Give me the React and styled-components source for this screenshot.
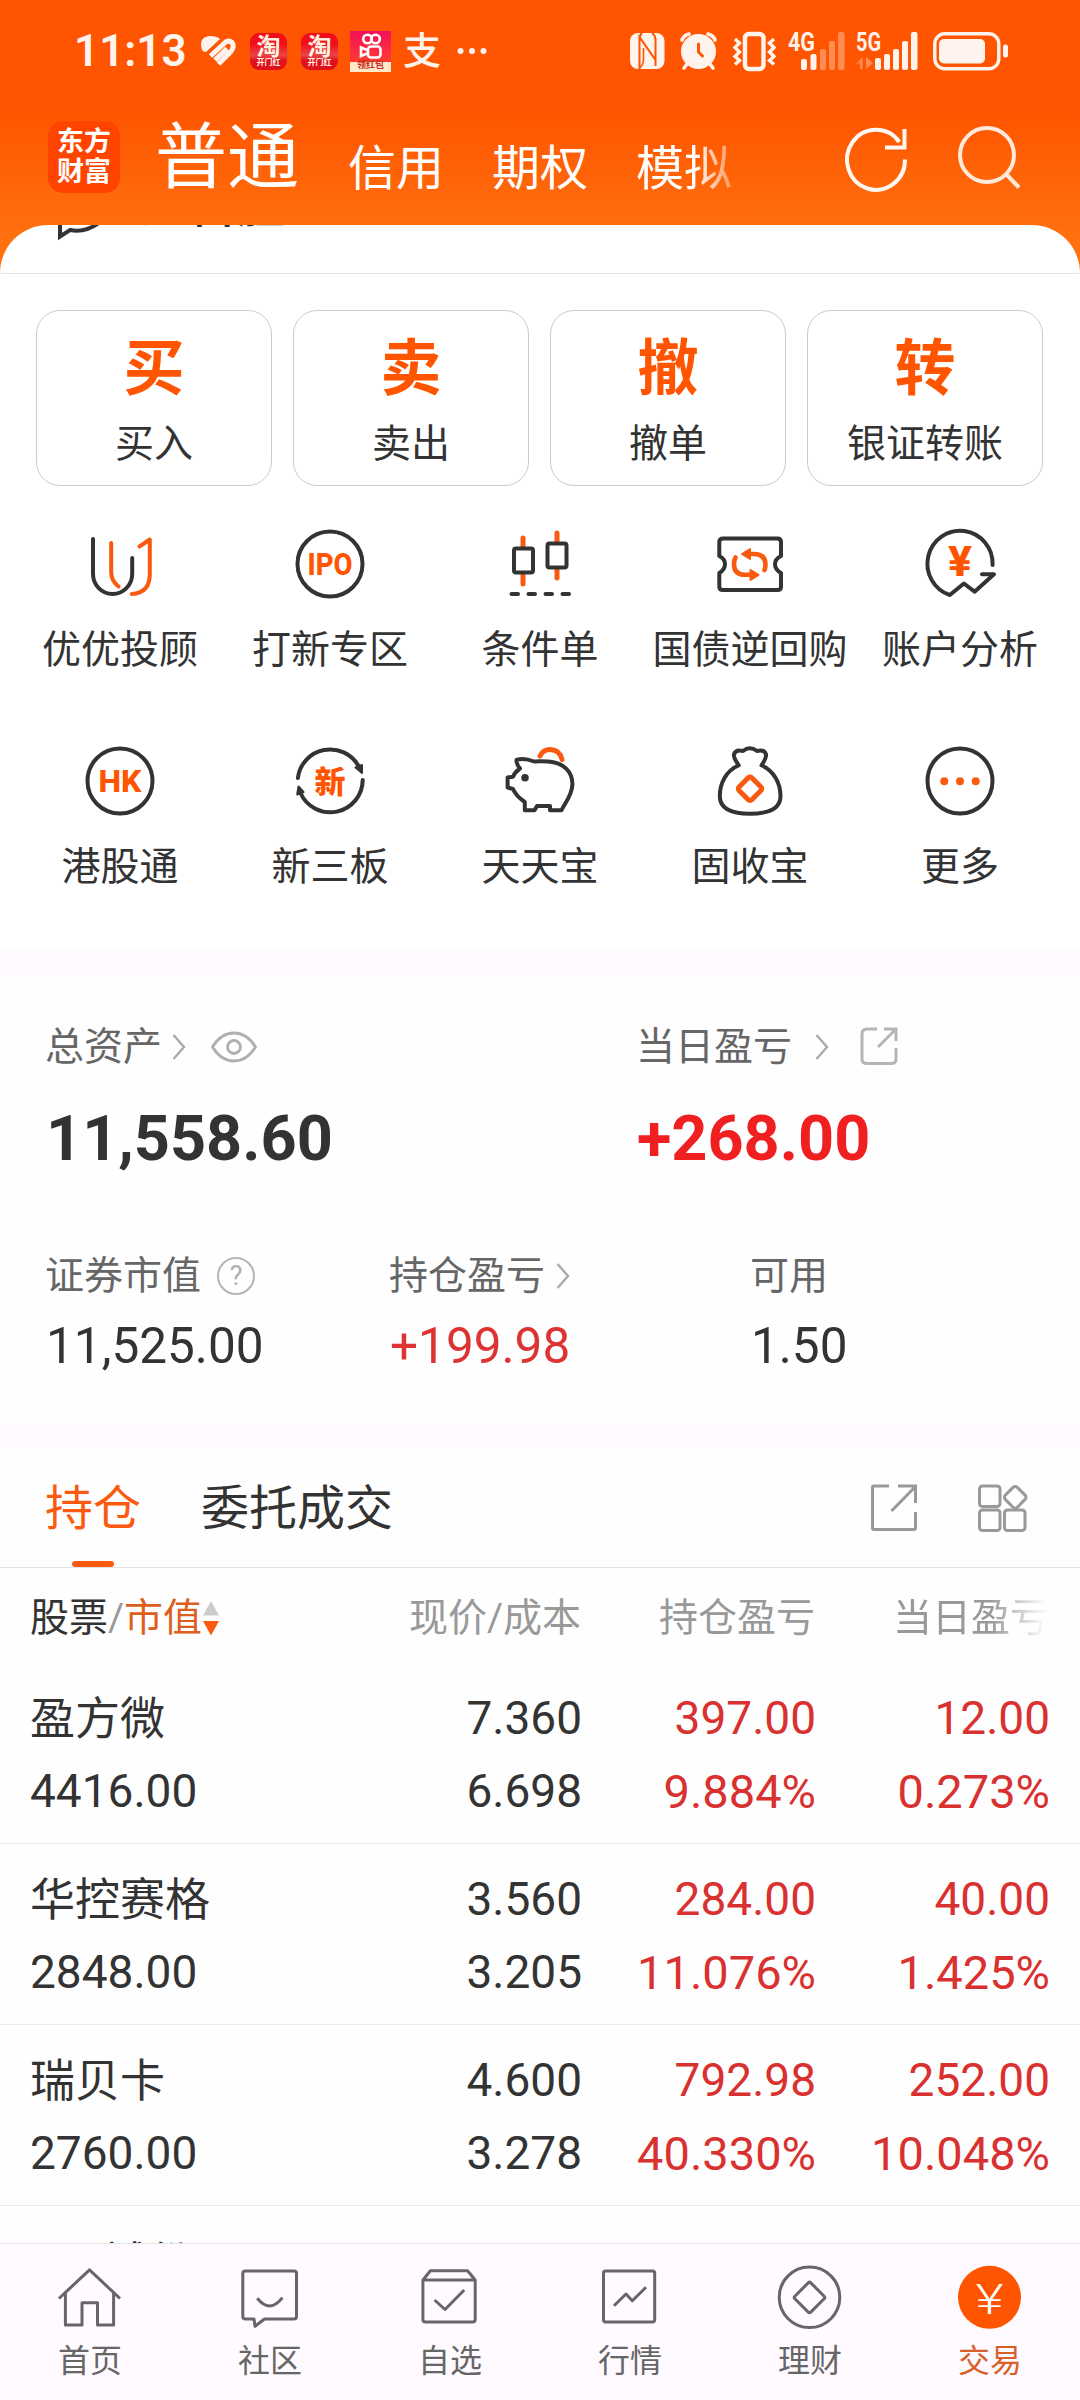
import React from 'react';
import styled, { createGlobalStyle } from 'styled-components';

const dark = '#333333';
const orange = '#fa5a0f';

const marketTabs = ['信用', '期权', '模拟'];

const trades = [
  { mark: '买', label: '买入' },
  { mark: '卖', label: '卖出' },
  { mark: '撤', label: '撤单' },
  { mark: '转', label: '银证转账' },
];

const tools = [
  { icon: 'adviser', label: '优优投顾' },
  { icon: 'ipo', label: '打新专区' },
  { icon: 'candles', label: '条件单' },
  { icon: 'repo', label: '国债逆回购' },
  { icon: 'account', label: '账户分析' },
  { icon: 'hk', label: '港股通' },
  { icon: 'board', label: '新三板' },
  { icon: 'pig', label: '天天宝' },
  { icon: 'bag', label: '固收宝' },
  { icon: 'more', label: '更多' },
];

const holdings = [
  { name: '盈方微', value: '4416.00', price: '7.360', cost: '6.698', profit: '397.00', rate: '9.884%', day: '12.00', dayRate: '0.273%' },
  { name: '华控赛格', value: '2848.00', price: '3.560', cost: '3.205', profit: '284.00', rate: '11.076%', day: '40.00', dayRate: '1.425%' },
  { name: '瑞贝卡', value: '2760.00', price: '4.600', cost: '3.278', profit: '792.98', rate: '40.330%', day: '252.00', dayRate: '10.048%' },
];

const navLinks = [
  { icon: 'home', label: '首页' },
  { icon: 'community', label: '社区' },
  { icon: 'picks', label: '自选' },
  { icon: 'market', label: '行情' },
  { icon: 'wealth', label: '理财' },
  { icon: 'trade', label: '交易', active: true },
];

// used by the shape maps below, so they have to come first
const IconText = styled.text.attrs({ textAnchor: 'middle', lengthAdjust: 'spacingAndGlyphs' })`
  fill: #ff5500;
  stroke: none;
  font-size: ${(props) => props.$size}px;
  font-weight: 800;
`;

const YenText = styled.text.attrs({ lengthAdjust: 'spacingAndGlyphs' })`
  fill: #fff;
  stroke: none;
  font-size: 43px;
  font-weight: 300;
  text-anchor: middle;
`;

const toolShapes = {
  adviser: <>
    <path d="M9 11V46a19.6 20 0 0 0 39.2 0V30" />
    <g stroke={orange}>
      <path d="M27.2 15V44Q27.2 53 34.6 58.5" />
      <path d="M55.5 18.5L65.8 11.5V46Q65.8 65 47.8 66" />
    </g>
  </>,
  ipo: <>
    <circle cx="36" cy="36" r="32.5" />
    <IconText x="36" y="47" textLength="45" $size={32}>IPO</IconText>
  </>,
  candles: <>
    <path d="M19 10V18M19 47V56M53 5V13M53 42V50" stroke={orange} strokeWidth="5" />
    <rect x="10" y="20.5" width="19" height="24" rx="2" />
    <rect x="43.5" y="15.5" width="19" height="24" rx="2" />
    <path d="M7.5 66h6.5M24.5 66h6.5M41.5 66h6.5M58.5 66h6.5" />
  </>,
  repo: <>
    <path d="M9 10.5H63.5Q67 10.5 67 14V28Q61 31 61 36.2Q61 41.5 67 45V58.5Q67 62 63.5 62H9Q5.3 62 5.3 58.5V45Q11 41.5 11 36.2Q11 31 5.3 28V14Q5.3 10.5 9 10.5Z" />
    <g stroke={orange} strokeWidth="4.6">
      <path d="M35 26H40Q51.5 26 51.5 37Q51.5 40 50.5 42M21.5 29.5Q20 32 20 36Q20 46.8 31 46.8H36" />
      <path d="M28 26L36 21V31ZM44.5 46.8L36.5 42V52Z" fill={orange} strokeWidth="2" />
    </g>
  </>,
  account: <>
    <path d="M68.6 37A32.6 33 0 1 0 25.8 67L39.9 55.5L50.6 63.7L70 46.3H58" />
    <IconText x="36" y="47.5" textLength="24" $size={43}>¥</IconText>
  </>,
  hk: <>
    <circle cx="36" cy="36" r="32.5" />
    <IconText x="36" y="47" textLength="43" $size={32}>HK</IconText>
  </>,
  board: <>
    <path d="M3.9 33A32.5 32.5 0 0 1 64.5 21M68.7 35A32.5 32.5 0 0 1 6.5 48" />
    <path d="M61.5 22.5L68 20V28ZM4.5 41.5L3.2 49.5L9.5 47Z" fill={dark} strokeWidth="2" />
    <IconText x="36" y="47.5" textLength="31" $size={31}>新</IconText>
  </>,
  pig: <>
    <path d="M12.5 15Q20 12.5 30 16.5Q37 16 44 16.5C60 17.5 68.4 27 68.4 39C68.4 50 61 58 57.4 65.3H46V61H33L30.5 65.3H20.8V57Q12 51 9 44L3.6 42.5V32.5L9 31.7Q11 27 16 23.5Q12.5 20 12.5 15Z" />
    <circle cx="21" cy="32.7" r="3" fill={dark} strokeWidth="1.5" />
    <path d="M36 11Q39 4.5 46.3 4.5Q56 5 58 14.5" stroke={orange} strokeWidth="5" />
  </>,
  bag: <>
    <path d="M24.7 20.3Q19.5 13 19.9 9.5Q21.5 4 29 6Q35.7 0.5 43 6Q50.5 4 52 9.5Q52.5 13 47.5 20.3C60 26 66.5 38 66.5 51C66.5 63 55 68.7 36 68.7C17 68.7 5.8 63 5.8 51C5.8 38 12 26 24.7 20.3Z" />
    <rect x="27" y="34.8" width="18" height="18" rx="2.5" transform="rotate(45 36 43.8)" stroke={orange} strokeWidth="5" />
  </>,
  more: <>
    <circle cx="36" cy="36" r="32.5" />
    <g fill={orange} stroke="none">
      <circle cx="20.3" cy="36.2" r="4" />
      <circle cx="36" cy="36.2" r="4" />
      <circle cx="51.7" cy="36.2" r="4" />
    </g>
  </>,
};

const navShapes = {
  home: <path d="M1 33.5L31.5 4.8L62 33.5M7.4 28V60H24V37.7H39.5V60H55.6V28" />,
  community: <path d="M7.5 6H56Q58.5 6 58.5 8.5V51.5Q58.5 54 56 54H26.5L17 61.3L16 54H7.5Q4.8 54 4.8 51.5V8.5Q4.8 6 7.5 6ZM19.2 33.3Q32 49 44.4 32.7" />,
  picks: <path d="M4.9 15H57.2V54.5Q57.2 57 54.7 57H7.5Q4.9 57 4.9 54.5ZM4.9 15L12.4 5.7H49.6L57.2 15M16.6 35L27 44.5L46.2 25" />,
  market: <path d="M7.5 6H54.5Q56.7 6 56.7 8.2V54.8Q56.7 57 54.5 57H7.5Q5.5 57 5.5 54.8V8.2Q5.5 6 7.5 6ZM16 40.7L28 29L34.3 35.7L48 22.3" />,
  wealth: <>
    <circle cx="31.5" cy="32.3" r="30.3" />
    <rect x="20.3" y="21.2" width="22.5" height="22.5" rx="1.8" transform="rotate(45 31.5 32.4)" />
  </>,
  trade: <>
    <circle cx="31.5" cy="32.3" r="31.5" fill="#ff5500" stroke="none" />
    <YenText x="31.5" y="48.5" textLength="28">¥</YenText>
  </>,
};

const Chevron = ({ gap }) => (
  <Inline $gap={gap}>
    <svg width="14" height="26" viewBox="0 0 14 26" fill="none" stroke="#aaa" strokeWidth="2.4">
      <path d="M1.5 1L12 13L1.5 25" />
    </svg>
  </Inline>
);

const TaobaoIcon = () => (
  <AppBadge>
    <span>淘</span>
    <small>开门红</small>
  </AppBadge>
);

const StatusBar = () => (
  <StatusRow>
    <Clock>11:13</Clock>
    <StatusItem $gap={14}>
      <svg width="37" height="32" viewBox="0 0 37 32">
        <path d="M2 15Q-2 2 10 1Q17 1 20 4L6 17Q3 17 2 15Z" fill="#fff3ee" />
        <path d="M10.5 21L23 9.5Q28 4 32 7.5Q35 12 30.5 17L18.5 29M15 25L27 13.5" fill="none" stroke="#fff3ee" strokeWidth="5" />
      </svg>
    </StatusItem>
    <StatusItem $gap={13}><TaobaoIcon /></StatusItem>
    <StatusItem $gap={14}><TaobaoIcon /></StatusItem>
    <StatusItem $gap={12}>
      <Kuaishou>
        <svg width="41" height="30" viewBox="0 0 41 30" fill="none" stroke="#fff" strokeWidth="2.6">
          <circle cx="17.5" cy="8" r="4.3" />
          <circle cx="25.5" cy="8" r="4.3" />
          <rect x="18" y="15.5" width="12.5" height="11" rx="3" />
          <path d="M17 19L11 16.5V25L17 22.5" />
        </svg>
        <small>领红包</small>
      </Kuaishou>
    </StatusItem>
    <StatusItem $gap={12}><Alipay>支</Alipay></StatusItem>
    <StatusItem $gap={16}>
      <svg width="30" height="8" viewBox="0 0 30 8" fill="#fff3ee">
        <circle cx="3.5" cy="4" r="3" />
        <circle cx="15" cy="4" r="3" />
        <circle cx="26.5" cy="4" r="3" />
      </svg>
    </StatusItem>
    <StatusItem $push>
      <svg width="35" height="36" viewBox="0 0 35 36">
        <rect x="0" y="0" width="34.5" height="36" rx="8" fill="#fff3ee" />
        <path d="M9.5 36V4L25.5 27V6Q25 2 22 0M9.5 4Q11 1 12 0M25.5 13V33" fill="none" stroke="#ff5500" strokeWidth="2" />
        <path d="M13.5 15V26Q13.5 32 9 35.5" fill="none" stroke="#ff5500" strokeWidth="1.6" />
      </svg>
    </StatusItem>
    <StatusItem $gap={15}>
      <svg width="37" height="38" viewBox="0 0 37 38" fill="none" stroke="#fff3ee" strokeWidth="3.6" strokeLinecap="round">
        <circle cx="18.5" cy="19.5" r="17.5" fill="#fff3ee" stroke="none" />
        <path d="M2 8Q4 3 9 2M35 8Q33 3 28 2M7 32L4 36M30 32L33 36" />
        <path d="M18.5 12V20L22.5 24" stroke="#ff5500" strokeWidth="3" />
      </svg>
    </StatusItem>
    <StatusItem $gap={16}>
      <svg width="43" height="39" viewBox="0 0 43 39" fill="none" stroke="#fff3ee" strokeWidth="3.4">
        <rect x="12" y="2" width="18.5" height="35" rx="4" strokeWidth="4.4" />
        <path d="M2 7L6.5 11L2 15.5L6.5 20L2 24.5L6.5 28.5L2 32.5M41 7L36.5 11L41 15.5L36.5 20L41 24.5L36.5 28.5L41 32.5" />
      </svg>
    </StatusItem>
    <StatusItem $gap={12}>
      <svg width="57" height="40" viewBox="0 0 57 40" fill="#fff3ee">
        <SignalText x="0" y="20" textLength="27">4G</SignalText>
        <rect x="13" y="28" width="6" height="11" rx="2" />
        <rect x="22.5" y="23" width="6" height="16" rx="2" />
        <g fillOpacity=".35">
          <rect x="32" y="18" width="6" height="21" rx="2" />
          <rect x="41" y="10" width="6" height="29" rx="2" />
          <rect x="50" y="1" width="6.5" height="38" rx="2" />
        </g>
      </svg>
    </StatusItem>
    <StatusItem $gap={11}>
      <svg width="62" height="40" viewBox="0 0 62 40" fill="#fff3ee">
        <SignalText x="0" y="20" textLength="25">5G</SignalText>
        <path d="M6.5 26V38H4V32L0 33ZM10 26V38L17 32Z" fillOpacity=".35" />
        <rect x="19" y="27" width="6" height="12" rx="2" />
        <rect x="28" y="23" width="6" height="16" rx="2" />
        <rect x="37" y="18" width="6" height="21" rx="2" />
        <rect x="46" y="10" width="6" height="29" rx="2" />
        <rect x="55" y="1" width="6.5" height="38" rx="2" />
      </svg>
    </StatusItem>
    <StatusItem $gap={15}>
      <svg width="76" height="39" viewBox="0 0 76 39" fill="#fff3ee">
        <rect x="1.8" y="1.8" width="64" height="35" rx="10" fill="none" stroke="#fff3ee" strokeWidth="3.4" />
        <rect x="6" y="7" width="46" height="24.5" rx="5" />
        <rect x="70" y="12.5" width="5" height="13" rx="2.5" />
      </svg>
    </StatusItem>
  </StatusRow>
);

const Holding = ({ item }) => (
  <HoldingRow>
    <Cell $align="left"><Name>{item.name}</Name><span>{item.value}</span></Cell>
    <Cell><span>{item.price}</span><span>{item.cost}</span></Cell>
    <Cell $up><span>{item.profit}</span><Rate>{item.rate}</Rate></Cell>
    <Cell $up><span>{item.day}</span><Rate>{item.dayRate}</Rate></Cell>
  </HoldingRow>
);

const App = () => {
  const toolList = tools.map((item) => (
    <Tool key={item.icon}>
      <svg width="72" height="72" viewBox="0 0 72 72" fill="none" stroke={dark} strokeWidth="4" strokeLinecap="round" strokeLinejoin="round">
        {toolShapes[item.icon]}
      </svg>
      <span>{item.label}</span>
    </Tool>
  ));

  const navList = navLinks.map((item) => (
    <NavLink key={item.icon} $active={item.active}>
      <svg width="64" height="64" viewBox="0 0 64 64" fill="none" stroke="#666" strokeWidth="3" strokeLinejoin="round">
        {navShapes[item.icon]}
      </svg>
      <span>{item.label}</span>
    </NavLink>
  ));

  return (
    <Page>
      <GlobalStyle />
      <Header>
        <StatusBar />
        <TitleBar>
          <Logo><span>东方</span><span>财富</span></Logo>
          <Title>普通</Title>
          <Markets>{marketTabs.map((item) => <span key={item}>{item}</span>)}</Markets>
          <Actions>
            <svg width="64" height="66" viewBox="0 0 64 66" fill="none" stroke="#fff8f2" strokeWidth="4">
              <path d="M61 34.5A29 30 0 1 1 55.3 17" />
              <path d="M60.5 4V22.500H41" />
            </svg>
            <svg width="64" height="66" viewBox="0 0 64 66" fill="none" stroke="#ffe9da" strokeWidth="4">
              <circle cx="29" cy="30" r="27" />
              <path d="M48 49L61 62.5" />
            </svg>
          </Actions>
        </TitleBar>
      </Header>

      <Sheet>
        <Notice>
          <svg width="62" height="40" viewBox="0 0 62 40" fill="none" stroke={dark} strokeWidth="4">
            <path d="M4 16V31.5L14 25Q30 28 44 17" />
          </svg>
          <span>过百胜</span>
        </Notice>
        <Trades>
          {trades.map((item) => (
            <TradeCard key={item.mark}>
              <b>{item.mark}</b>
              <span>{item.label}</span>
            </TradeCard>
          ))}
        </Trades>
        <Tools>{toolList}</Tools>
      </Sheet>

      <Band />
      <Assets>
        <Totals>
          <Figure>
            <Label>
              总资产<Chevron gap={10} />
              <Inline $gap={25}>
                <svg width="46" height="32" viewBox="0 0 46 32" fill="none" stroke="#b0aeb0" strokeWidth="2.8">
                  <path d="M1.5 16Q10 2 23 2T44.5 16Q36 30 23 30T1.5 16Z" />
                  <circle cx="23" cy="16" r="6.5" />
                </svg>
              </Inline>
            </Label>
            <Total>11,558.60</Total>
          </Figure>
          <Figure>
            <Label>
              当日盈亏<Chevron gap={23} />
              <Inline $gap={31}>
                <svg width="38" height="40" viewBox="0 0 38 40" fill="none" stroke="#b8b4b6" strokeWidth="3">
                  <path d="M17 2H7Q2 2 2 7V32Q2 36.5 7 36.5H31Q36 36.5 36 32V21M18 20L35 3M24 2H36V14" />
                </svg>
              </Inline>
            </Label>
            <Total $up>+268.00</Total>
          </Figure>
        </Totals>
        <Details>
          <Figure>
            <Label>
              证券市值
              <Inline $gap={16}>
                <Help>?</Help>
              </Inline>
            </Label>
            <Amount>11,525.00</Amount>
          </Figure>
          <Figure>
            <Label>持仓盈亏<Chevron gap={11} /></Label>
            <Amount $up>+199.98</Amount>
          </Figure>
          <Figure>
            <Label>可用</Label>
            <Amount>1.50</Amount>
          </Figure>
        </Details>
      </Assets>
      <Band />

      <Tabs>
        <Tab $active>持仓</Tab>
        <Tab>委托成交</Tab>
        <TabIcons>
          <svg width="46" height="48" viewBox="0 0 46 48" fill="none" stroke="#999" strokeWidth="3">
            <path d="M18 2H3Q1.5 2 1.5 3.5V44Q1.5 45.5 3 45.5H43Q44.5 45.5 44.5 44V28M27 2H44.5V19M20.5 27L43.5 3.5" />
          </svg>
          <svg width="50" height="48" viewBox="0 0 50 48" fill="none" stroke="#999" strokeWidth="3">
            <rect x="1.5" y="2" width="20.5" height="20.5" rx="3" />
            <rect x="1.5" y="26" width="20.5" height="20.5" rx="3" />
            <rect x="26.5" y="26" width="20.5" height="20.5" rx="3" />
            <rect x="28.7" y="4.8" width="17" height="17" rx="3" transform="rotate(45 37.2 13.3)" />
          </svg>
        </TabIcons>
      </Tabs>

      <HoldingsHead>
        <SortLabel>
          股票<i>/</i><em>市值</em>
          <svg width="18" height="35" viewBox="0 0 18 35">
            <path d="M9 0L17 14.5H1Z" fill="#ccc" />
            <path d="M9 34.5L17 20H1Z" fill={orange} />
          </svg>
        </SortLabel>
        <span>现价/成本</span>
        <span>持仓盈亏</span>
        <FadedLabel>当日盈亏</FadedLabel>
      </HoldingsHead>
      {holdings.map((item) => <Holding key={item.name} item={item} />)}
      <CutRow><Name>*ST城份</Name></CutRow>

      <Nav>{navList}</Nav>
    </Page>
  );
};

const GlobalStyle = createGlobalStyle`
  * {
    box-sizing: border-box;
  }
  body {
    margin: 0;
    background: #fff;
  }
  svg {
    display: block;
    flex: none;
    overflow: visible;
  }
`;

const Page = styled.div`
  display: flex;
  flex-direction: column;
  width: 1080px;
  height: 2400px;
  overflow: hidden;
  background: #fefefe;
  color: ${dark};
  font-family: Roboto, 'Noto Sans CJK SC', sans-serif;
  font-size: 39px;
  line-height: 1;
  white-space: nowrap;
`;

const SignalText = styled.text.attrs({ lengthAdjust: 'spacingAndGlyphs' })`
  font-size: 26px;
  font-weight: 700;
`;

const Header = styled.header`
  flex: none;
  height: 275px;
  background: linear-gradient(#ff5500 110px, #ff700f 235px);
`;

const StatusRow = styled.div`
  display: flex;
  align-items: center;
  height: 102px;
  padding: 0 71px 0 74px;
`;

const Clock = styled.div`
  width: 112px;
  color: #fff3ee;
  font-size: 44px;
  font-weight: 600;
`;

const StatusItem = styled.div`
  margin-left: ${(props) => (props.$push ? 'auto' : `${props.$gap}px`)};
`;

const AppBadge = styled.div`
  display: flex;
  flex-direction: column;
  align-items: center;
  width: 37px;
  height: 37px;
  padding-top: 2px;
  border-radius: 9px;
  background: linear-gradient(#f20d1a 30%, #e8454a 60%, #e0101c 75%);
  color: #fff3e0;
  span {
    font-size: 24px;
    font-weight: 700;
  }
  small {
    font-size: 8px;
    font-weight: 700;
  }
`;

const Kuaishou = styled.div`
  width: 41px;
  height: 41px;
  background: linear-gradient(#f5105a, #ff3b30 75%, #ffe9c9 76%);
  small {
    display: block;
    color: #c22a1a;
    font-size: 9px;
    font-weight: 700;
    text-align: center;
  }
`;

const Alipay = styled.div`
  width: 38px;
  color: #fff3ee;
  font-size: 38px;
  font-weight: 500;
`;

const TitleBar = styled.div`
  display: flex;
  align-items: flex-start;
  padding: 19px 58px 0 48px;
  color: #fff;
`;

const Logo = styled.div`
  display: flex;
  flex-direction: column;
  align-items: center;
  justify-content: center;
  gap: 3px;
  width: 72px;
  height: 72px;
  border-radius: 15px;
  background: #ff4400;
  font-size: 27px;
  font-weight: 700;
`;

const Title = styled.h1`
  margin: 1px 0 0 35px;
  font-size: 72px;
  font-weight: 400;
`;

const Markets = styled.div`
  display: flex;
  gap: 48px;
  margin: 24px 0 0 49px;
  font-size: 48px;
  span:last-child {
    mask-image: linear-gradient(90deg, #000 60%, rgba(0, 0, 0, .35));
  }
`;

const Actions = styled.div`
  display: flex;
  gap: 50px;
  margin: 4px 0 0 auto;
`;

const Sheet = styled.main`
  flex: none;
  height: 725px;
  margin-top: -50px;
  border-radius: 48px 48px 0 0;
  background: #fff;
  overflow: hidden;
`;

const Notice = styled.div`
  display: flex;
  align-items: flex-start;
  height: 49px;
  padding-left: 56px;
  border-bottom: 1px solid #e5e5e5;
  svg {
    margin-top: -20px;
  }
  span {
    margin: -43px 0 0 23px;
    font-size: 48px;
    font-weight: 500;
  }
`;

const Trades = styled.div`
  display: grid;
  grid-template-columns: repeat(4, 236px);
  gap: 21px;
  padding: 36px 36px 0;
`;

const TradeCard = styled.div`
  display: flex;
  flex-direction: column;
  align-items: center;
  height: 176px;
  padding-top: 28px;
  border: 1px solid #ccc;
  border-radius: 24px;
  b {
    color: #ff5500;
    font-size: 61px;
  }
  span {
    margin-top: 25px;
  }
`;

const Tools = styled.div`
  display: grid;
  grid-template-columns: repeat(5, 1fr);
  grid-auto-rows: 217px;
  padding: 42px 15px 0;
`;

const Tool = styled.div`
  display: flex;
  flex-direction: column;
  align-items: center;
  span {
    margin-top: 31px;
  }
`;

const Band = styled.div`
  flex: none;
  height: 24px;
  background: #fffaff;
`;

const Assets = styled.section`
  flex: none;
  height: 449px;
  padding: 53px 0 0 45px;
`;

const Totals = styled.div`
  display: grid;
  grid-template-columns: 591px auto;
  height: 229px;
`;

const Details = styled.div`
  display: grid;
  grid-template-columns: 344px 361px auto;
`;

const Figure = styled.div`
  display: flex;
  flex-direction: column;
`;

const Label = styled.div`
  display: flex;
  align-items: center;
  height: 40px;
  color: #666;
`;

const Inline = styled.span`
  margin-left: ${(props) => props.$gap}px;
`;

const Help = styled.span`
  display: block;
  width: 38px;
  height: 38px;
  border: 2.5px solid #b5b3b5;
  border-radius: 50%;
  color: #b0aeb0;
  font-size: 27px;
  line-height: 34px;
  text-align: center;
`;

const Total = styled.div`
  margin-top: 40px;
  padding-left: 1px;
  color: ${(props) => (props.$up ? '#f02020' : dark)};
  font-size: 63px;
  font-weight: 700;
`;

const Amount = styled.div`
  margin-top: 26px;
  padding-left: 1px;
  color: ${(props) => (props.$up ? '#dd3333' : dark)};
  font-size: 49.5px;
`;

const Tabs = styled.div`
  display: flex;
  flex: none;
  gap: 60px;
  height: 121px;
  padding: 0 52px 0 45px;
  border-bottom: 1px solid #e2e2e2;
`;

const Tab = styled.div`
  position: relative;
  padding-top: 38px;
  color: ${(props) => (props.$active ? orange : dark)};
  font-size: 48px;
  &::after {
    content: '';
    display: ${(props) => (props.$active ? 'block' : 'none')};
    position: absolute;
    bottom: 0;
    left: 27px;
    width: 42px;
    height: 6px;
    border-radius: 3px;
    background: ${orange};
  }
`;

const TabIcons = styled.div`
  display: flex;
  gap: 61px;
  margin: 37px 0 0 auto;
`;

const HoldingsHead = styled.div`
  display: grid;
  grid-template-columns: 351px 200px 234px 234px;
  flex: none;
  align-items: center;
  height: 95px;
  padding: 5px 0 0 30px;
  color: #999;
  text-align: right;
`;

const SortLabel = styled.div`
  display: flex;
  align-items: center;
  color: ${dark};
  i, em {
    font-style: normal;
  }
  i {
    width: 16px;
    color: #999;
  }
  em {
    color: #dd5f20;
  }
`;

const FadedLabel = styled.span`
  mask-image: linear-gradient(90deg, #000 75%, rgba(0, 0, 0, .08) 97%);
`;

const HoldingRow = styled.div`
  display: grid;
  grid-template-columns: 351px 201px 234px 234px;
  flex: none;
  height: 181px;
  padding: 32px 0 0 30px;
  border-bottom: 1px solid #eaeaea;
`;

const Cell = styled.div`
  display: flex;
  flex-direction: column;
  gap: 26px;
  color: ${(props) => (props.$up ? '#d93030' : dark)};
  font-size: 46px;
  line-height: 47px;
  text-align: ${(props) => props.$align || 'right'};
`;

const Rate = styled.span`
  font-size: 47px;
`;

const Name = styled.span`
  height: 47px;
  font-size: 45px;
  line-height: 49px;
`;

const CutRow = styled.div`
  flex: none;
  height: 37px;
  padding: 34px 0 0 30px;
  line-height: 47px;
  overflow: hidden;
`;

const Nav = styled.nav`
  display: grid;
  grid-template-columns: repeat(6, 1fr);
  flex: 1;
  border-top: 1px solid #e6e2e6;
  background: #fffaff;
`;

const NavLink = styled.div`
  display: flex;
  flex-direction: column;
  align-items: center;
  padding-top: 21px;
  color: ${(props) => (props.$active ? '#d9602a' : '#666')};
  font-size: 32px;
  span {
    margin-top: 16px;
  }
`;

export default App;
